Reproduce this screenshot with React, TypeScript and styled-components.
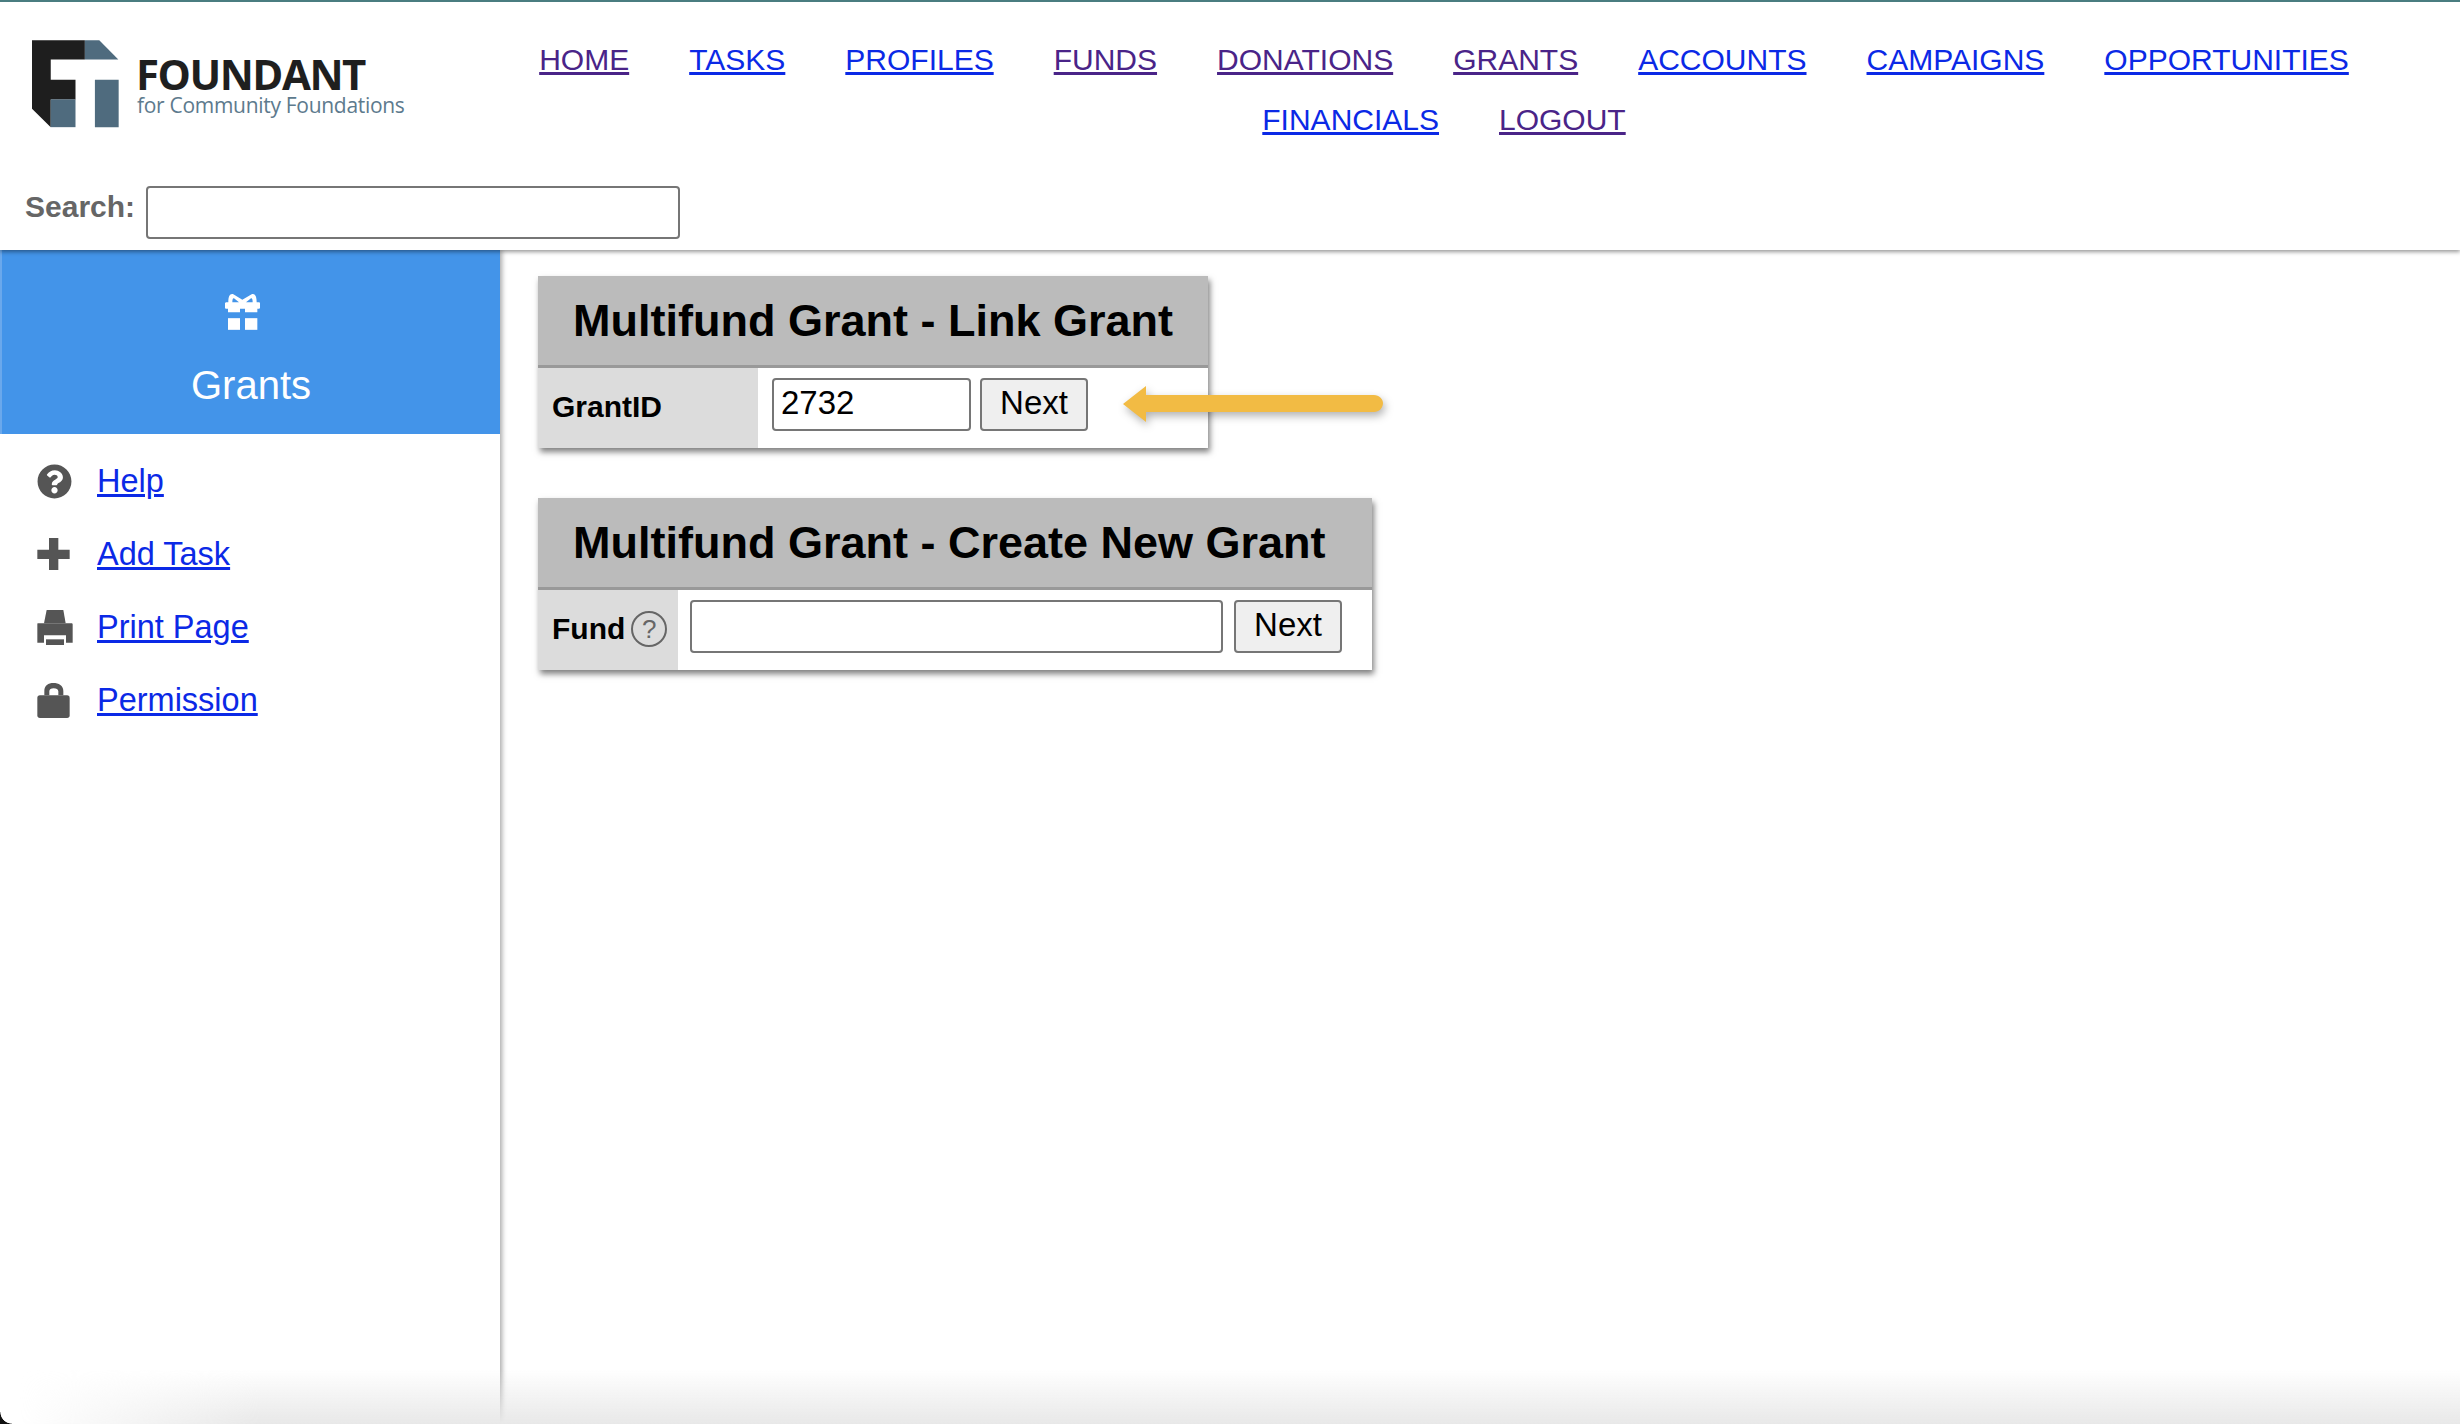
import React from 'react'
import styled, { createGlobalStyle } from 'styled-components'
import { FaQuestionCircle } from 'react-icons/fa'

const GlobalStyle = createGlobalStyle`
  html, body {
    margin: 0;
    padding: 0;
    background: #fff;
  }
  body {
    font-family: "Liberation Sans", Arial, sans-serif;
    color: #000;
  }
`

const Page = styled.div`
  position: relative;
  display: flex;
  flex-direction: column;
  width: 2460px;
  height: 1424px;
  overflow: hidden;
`

const Header = styled.header`
  position: relative;
  z-index: 2;
  flex: none;
  height: 250px;
  box-sizing: border-box;
  border-top: 2px solid #4a7d80;
  background: #fff;
  box-shadow: 0 2px 4px rgba(0, 0, 0, 0.4);
`

const TopRow = styled.div`
  display: flex;
  height: 184px;
`

const LogoBlock = styled.div`
  flex: none;
  display: flex;
  gap: 17px;
  box-sizing: border-box;
  width: 428px;
  padding: 38px 0 0 32px;
`

const LogoText = styled.div`
  display: flex;
  flex-direction: column;
  padding-top: 13px;
  font-family: "Open Sans", sans-serif;
`

const LogoName = styled.span`
  font-size: 42px;
  line-height: 41px;
  font-weight: 700;
  letter-spacing: -1.5px;
  color: #1f1f1f;
`

const LogoTag = styled.span`
  margin-top: -2px;
  padding-left: 1px;
  font-size: 21px;
  line-height: 26px;
  letter-spacing: -0.3px;
  color: #5d7a8d;
`

const Nav = styled.nav`
  flex: 1;
  display: flex;
  flex-wrap: wrap;
  justify-content: center;
  align-content: flex-start;
  column-gap: 60px;
  padding-top: 28px;
`

const NavLink = styled.a<{ $visited?: boolean }>`
  font-size: 30px;
  line-height: 60px;
  color: ${p => (p.$visited ? '#4a2488' : '#0b29e6')};
  text-decoration: underline;
`

const SearchRow = styled.div`
  display: flex;
  align-items: center;
  gap: 11px;
  padding-left: 25px;
`

const SearchLabel = styled.label`
  margin-top: -12px;
  font-size: 30px;
  font-weight: 700;
  color: #666;
`

const TextInput = styled.input<{ $width: number }>`
  box-sizing: border-box;
  flex: none;
  width: ${p => p.$width}px;
  height: 53px;
  padding: 0 0 4px 7px;
  border: 2px solid #767676;
  border-radius: 4px;
  background: #fff;
  color: #000;
  font-family: "Liberation Sans", Arial, sans-serif;
  font-size: 33px;
`

const Body = styled.div`
  flex: 1;
  display: flex;
  min-height: 0;
`

const Sidebar = styled.aside`
  position: relative;
  z-index: 1;
  flex: none;
  width: 500px;
  background: #fff;
  box-shadow: 2px 0 5px rgba(0, 0, 0, 0.35);
`

const ModuleBand = styled.div`
  display: flex;
  flex-direction: column;
  align-items: center;
  box-sizing: border-box;
  height: 184px;
  padding-top: 43px;
  border-left: 2px solid #6aa8ec;
  background: #4394e9;
  color: #fff;
`

const GiftIcon = styled.svg`
  width: 35px;
  height: 37px;
  margin-right: 18px;
  fill: #fff;
`

const ModuleName = styled.div`
  margin-top: 33px;
  font-size: 40px;
  line-height: 44px;
`

const SideMenu = styled.ul`
  margin: 0;
  padding: 10.5px 0 0 37px;
  list-style: none;
`

const SideItem = styled.li`
  display: flex;
  align-items: center;
  height: 73px;
  font-size: 32.5px;
`

const SideIcon = styled.span`
  flex: none;
  display: flex;
  align-items: center;
  width: 60px;
  color: #555;

  svg {
    display: block;
    fill: currentColor;
  }
`

const SideLink = styled.a`
  color: #0b29e6;
  text-decoration: underline;
`

const Main = styled.main`
  flex: 1;
  display: flex;
  flex-direction: column;
  align-items: flex-start;
  gap: 50px;
  padding: 26px 0 0 38px;
`

const Panel = styled.section<{ $width: number }>`
  position: relative;
  width: ${p => p.$width}px;
  background: #fff;
  box-shadow: 2px 4px 6px rgba(0, 0, 0, 0.5);
`

const PanelTitle = styled.h2`
  box-sizing: border-box;
  height: 92px;
  margin: 0;
  padding: 0 0 0 35px;
  border-bottom: 3px solid #999;
  background: #bbb;
  font-size: 45px;
  line-height: 90px;
  font-weight: 700;
`

const PanelRow = styled.div`
  display: flex;
  height: 80px;
`

const RowLabel = styled.div<{ $width: number }>`
  flex: none;
  display: flex;
  align-items: center;
  gap: 6px;
  box-sizing: border-box;
  width: ${p => p.$width}px;
  padding: 0 0 2px 14px;
  background: #dcdcdc;
  font-size: 30px;
  font-weight: 700;
`

const RowFields = styled.div<{ $inset: number; $gap: number }>`
  display: flex;
  align-items: flex-start;
  gap: ${p => p.$gap}px;
  padding: 10px 0 0 ${p => p.$inset}px;
`

const NextButton = styled.button`
  flex: none;
  box-sizing: border-box;
  width: 108px;
  height: 53px;
  padding: 0 0 4px;
  border: 2px solid #767676;
  border-radius: 4px;
  background: #efefef;
  color: #000;
  font-family: "Liberation Sans", Arial, sans-serif;
  font-size: 33px;
`

const HelpBubble = styled.span`
  display: flex;
  align-items: center;
  justify-content: center;
  box-sizing: border-box;
  width: 36px;
  height: 36px;
  border: 2px solid #666;
  border-radius: 50%;
  color: #666;
  font-size: 26px;
  font-weight: 400;
`

const Arrow = styled.svg`
  position: absolute;
  left: 585px;
  top: 110px;
  width: 260px;
  height: 36px;
  overflow: visible;
  filter: drop-shadow(2px 4px 4px rgba(0, 0, 0, 0.3));
`

const BottomFade = styled.div`
  position: absolute;
  z-index: 3;
  left: 0;
  right: 0;
  bottom: 0;
  height: 55px;
  pointer-events: none;
  background: linear-gradient(to bottom, rgba(232, 232, 232, 0), rgba(232, 232, 232, 1));
  -webkit-mask-image: linear-gradient(to right, transparent 20px, #000 260px);
  mask-image: linear-gradient(to right, transparent 20px, #000 260px);
`

const WindowCorner = styled.div`
  position: absolute;
  z-index: 4;
  left: 0;
  bottom: 0;
  width: 12px;
  height: 12px;
  background: radial-gradient(circle at 100% 0, transparent 11.3px, #111 12px);
`

function Logo() {
  return (
    <svg width="87" height="88" viewBox="37 30 260 262" aria-hidden="true">
      <path fill="#1e1e1e" d="M37 30H195V88H93V148H167V207H93V290L37 235Z" />
      <path fill="#4f6b7e" d="M195 30H238L295 88H195Z" />
      <path fill="#4f6b7e" d="M93 207H167V290H93Z" />
      <path fill="#4f6b7e" d="M225 148H296V290H225Z" />
    </svg>
  )
}

function PlusIcon() {
  return (
    <svg width="33" height="32" viewBox="0 0 97 96">
      <path d="M35 0H63V35H97V63H63V96H35V63H0V35H35Z" />
    </svg>
  )
}

function PrintIcon() {
  return (
    <svg width="36" height="35" viewBox="0 0 106 105">
      <path d="M28 0H78L85 40H20Z" />
      <path d="M0 42C0 40 2 40 4 40H102C104 40 106 41 106 43V98H86V76H20V98H0Z" />
      <path d="M26 88H80V105H26Z" />
    </svg>
  )
}

function LockIcon() {
  return (
    <svg width="33" height="35" viewBox="0 0 97 105">
      <path d="M21 37V24C21 8 33 0 48 0C64 0 78 8 78 24V37H63V25C63 19 57 16 49 16C41 16 36 19 36 25V37Z" />
      <rect x="0" y="37" width="97" height="68" rx="8" />
    </svg>
  )
}

const topLinks = [
  { label: 'HOME', visited: true },
  { label: 'TASKS' },
  { label: 'PROFILES' },
  { label: 'FUNDS', visited: true },
  { label: 'DONATIONS', visited: true },
  { label: 'GRANTS', visited: true },
  { label: 'ACCOUNTS' },
  { label: 'CAMPAIGNS' },
  { label: 'OPPORTUNITIES' },
  { label: 'FINANCIALS' },
  { label: 'LOGOUT', visited: true },
]

const sideLinks = [
  { label: 'Help', icon: <FaQuestionCircle size={35} /> },
  { label: 'Add Task', icon: <PlusIcon /> },
  { label: 'Print Page', icon: <PrintIcon /> },
  { label: 'Permission', icon: <LockIcon /> },
]

export default function App() {
  return (
    <Page>
      <GlobalStyle />
      <Header>
        <TopRow>
          <LogoBlock>
            <Logo />
            <LogoText>
              <LogoName>FOUNDANT</LogoName>
              <LogoTag>for Community Foundations</LogoTag>
            </LogoText>
          </LogoBlock>
          <Nav>
            {topLinks.map(l => (
              <NavLink key={l.label} href="#" $visited={l.visited}>
                {l.label}
              </NavLink>
            ))}
          </Nav>
        </TopRow>
        <SearchRow>
          <SearchLabel>Search:</SearchLabel>
          <TextInput $width={534} />
        </SearchRow>
      </Header>
      <Body>
        <Sidebar>
          <ModuleBand>
            <GiftIcon viewBox="0 0 105 110">
              <path d="M25 3L52 20L80 3C90 0 95 8 95 27H102C104 27 105 29 105 31V43C105 46 103 47 101 47H97V57H60V47H45V57H9V47H4C2 47 0 46 0 43V31C0 29 2 27 4 27H10C10 8 15 0 25 3ZM27 15C23 14 22 20 22 27H42ZM78 15L63 27H83C83 20 82 14 78 15Z" fillRule="evenodd" />
              <rect x="9" y="75" width="36" height="35" />
              <rect x="60" y="75" width="37" height="35" />
            </GiftIcon>
            <ModuleName>Grants</ModuleName>
          </ModuleBand>
          <SideMenu>
            {sideLinks.map(l => (
              <SideItem key={l.label}>
                <SideIcon>{l.icon}</SideIcon>
                <SideLink href="#">{l.label}</SideLink>
              </SideItem>
            ))}
          </SideMenu>
        </Sidebar>
        <Main>
          <Panel $width={670}>
            <PanelTitle>Multifund Grant - Link Grant</PanelTitle>
            <PanelRow>
              <RowLabel $width={220}>GrantID</RowLabel>
              <RowFields $inset={14} $gap={9}>
                <TextInput $width={199} defaultValue="2732" />
                <NextButton>Next</NextButton>
              </RowFields>
            </PanelRow>
            <Arrow viewBox="0 0 260 36">
              <path fill="#f2bb44" d="M0 18L23 0V9H251C256 9 260 13 260 17C260 22 256 26 251 26H23V36Z" />
            </Arrow>
          </Panel>
          <Panel $width={834}>
            <PanelTitle>Multifund Grant - Create New Grant</PanelTitle>
            <PanelRow>
              <RowLabel $width={140}>
                Fund
                <HelpBubble>?</HelpBubble>
              </RowLabel>
              <RowFields $inset={12} $gap={11}>
                <TextInput $width={533} />
                <NextButton>Next</NextButton>
              </RowFields>
            </PanelRow>
          </Panel>
        </Main>
      </Body>
      <BottomFade />
      <WindowCorner />
    </Page>
  )
}
